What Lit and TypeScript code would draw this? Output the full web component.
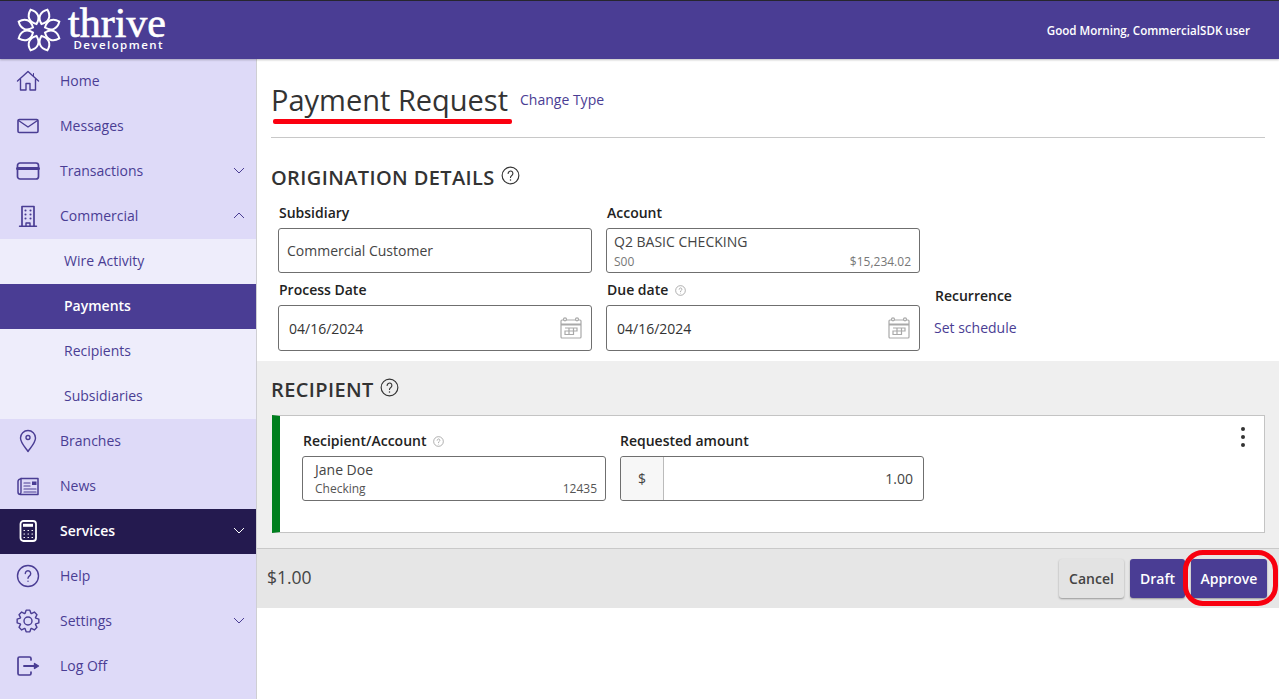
import { LitElement, html, css, svg } from "lit";
import { customElement } from "lit/decorators.js";

const ic = (body: unknown, w = 24, h = 24) => html`<svg class="nav-svg" width=${w} height=${h} viewBox="0 0 24 24" fill="none" stroke="currentColor" stroke-width="1.4" stroke-linejoin="round" stroke-linecap="round">${body}</svg>`;

const gearPath = (() => {
  const teeth = 8;
  const cx = 12, cy = 12;
  let d = "";
  for (let i = 0; i < teeth; i++) {
    const a = (i / teeth) * Math.PI * 2;
    const pt = (r: number, off: number) => {
      const t = a + off;
      return `${(cx + r * Math.cos(t)).toFixed(2)} ${(cy + r * Math.sin(t)).toFixed(2)}`;
    };
    d += `${i === 0 ? "M" : "L"}${pt(8.2, -0.36)} L${pt(11, -0.17)} L${pt(11, 0.17)} L${pt(8.2, 0.36)} `;
  }
  return d + "Z";
})();

const icons: Record<string, unknown> = {
  home: ic(svg`<path d="M1.500 12 12 2.500 22.500 12"/><path d="M4.500 10.500V21h5.500v-6.500h4V21h5.500V10.500"/><path d="M17.500 4.500v2.500" stroke-width="1"/>`),
  mail: ic(svg`<rect x="2" y="5.500" width="20" height="13" rx="1.300" stroke-width="1.600"/><path d="M2.500 6.500 12 13l9.500-6.500"/>`),
  card: ic(svg`<rect x="1.500" y="4" width="21" height="16" rx="2.500" stroke-width="1.700"/><path d="M1.500 9.500h21" stroke-width="3"/>`),
  building: ic(svg`<path d="M6 22V2.500h12V22" stroke-width="1.700"/><path d="M3.500 22.300h17"/><path d="M10 22v-3h4v3"/><g stroke-width="2.100"><path d="M9.500 6.500h.01M14.500 6.500h.01M9.500 10.500h.01M14.500 10.500h.01M9.500 14.500h.01M14.500 14.500h.01"/></g>`),
  pin: ic(svg`<path d="M12 22.500C8.500 17.500 4.500 13.500 4.500 9a7.500 7.500 0 0 1 15 0c0 4.500-4 8.500-7.500 13.500Z"/><circle cx="12" cy="8.500" r="2"/>`),
  news: ic(svg`<path d="M5 4.500h17v16H4.500A2.500 2.500 0 0 1 2 18V7.500A2.500 2.500 0 0 1 4.500 5" stroke-width="1.500"/><path d="M5 4.500V18a2 2 0 0 1-1 2"/><path d="M8 9h6M8 12h6M8 15h12M8 18h12" stroke-width="1.200"/><rect x="16" y="7.500" width="4.500" height="3.500" fill="currentColor" stroke="none"/>`),
  calc: ic(svg`<rect x="4.500" y="2" width="15.500" height="20" rx="3" stroke-width="1.800"/><rect x="7" y="4.800" width="10" height="3" fill="currentColor" stroke="none"/><path stroke-width="1.200" d="M8 11.500h.5M12 11.500h.5M16 11.500h.5M8 15h.5M12 15h.5M16 15h.5M8 18.500h.5M12 18.500h.5M16 18.500h.5"/>`),
  help: ic(svg`<circle cx="12" cy="12" r="10.500"/><path d="M9.300 9.500a2.700 2.700 0 1 1 4.200 2.300c-1 .7-1.500 1.200-1.500 2.500"/><path d="M12 17.300h.01"/>`),
  gear: ic(svg`<circle cx="12" cy="12" r="4"/><path d=${gearPath}/>`),
  logoff: ic(svg`<path d="M15 6V4.500A1.500 1.500 0 0 0 13.500 3H3.500A1.500 1.500 0 0 0 2 4.500v15A1.500 1.500 0 0 0 3.500 21h10a1.500 1.500 0 0 0 1.500-1.500V18" stroke-width="1.700"/><path d="M8 12h11" stroke-width="1.900"/><path d="M18.500 9.500 22.500 12l-4 2.500Z" fill="currentColor"/>`),
};

const chevDown = html`<svg class="chev" width="12" height="7" viewBox="0 0 12 7" fill="none" stroke="currentColor" stroke-width="1"><path d="M1 1l5 5 5-5"/></svg>`;
const chevUp = html`<svg class="chev" width="12" height="7" viewBox="0 0 12 7" fill="none" stroke="currentColor" stroke-width="1"><path d="M1 6l5-5 5 5"/></svg>`;

const helpIcon = (size: number) => html`<svg width=${size} height=${size} viewBox="0 0 20 20" fill="none" stroke="currentColor" stroke-width="1.200"><circle cx="10" cy="10" r="8.800"/><path stroke-linecap="round" d="M7.500 7.800a2.500 2.500 0 1 1 3.900 2.100c-.9.600-1.400 1-1.400 2.100"/><circle cx="10" cy="14.700" r=".8" fill="currentColor" stroke="none"/></svg>`;

const calIcon = html`<svg class="cal" width="22" height="22" viewBox="0 0 22 22" fill="none" stroke="#a9a9a9" stroke-width="1.200"><rect x="1" y="3" width="20" height="18" rx="1"/><path d="M1 7.500h20" stroke-width="2"/><circle cx="5" cy="2.300" r="1.500" fill="#fff"/><circle cx="17" cy="2.300" r="1.500" fill="#fff"/><path d="M5 11h12v3H5M5 14h8.500v3.500H5ZM9 11v6.500M13.500 11v6.500"/></svg>`;

const flower = html`<svg width="46" height="46" viewBox="0 0 46 46" fill="none" stroke="#fff" stroke-width="2">
  ${[0, 45, 90, 135, 180, 225, 270, 315].map(
    (a) => svg`<path transform="rotate(${a + 22.5} 23 23)" d="M23 16.500C16.800 12 16.800 5.500 23 1c6.200 4.500 6.200 11 0 15.500Z"/>`,
  )}
</svg>`;

interface NavItem {
  label: string;
  icon?: string;
  chev?: "down" | "up";
  kind?: "sub" | "sub-active" | "dark";
}

const nav: NavItem[] = [
  { label: "Home", icon: "home" },
  { label: "Messages", icon: "mail" },
  { label: "Transactions", icon: "card", chev: "down" },
  { label: "Commercial", icon: "building", chev: "up" },
  { label: "Wire Activity", kind: "sub" },
  { label: "Payments", kind: "sub-active" },
  { label: "Recipients", kind: "sub" },
  { label: "Subsidiaries", kind: "sub" },
  { label: "Branches", icon: "pin" },
  { label: "News", icon: "news" },
  { label: "Services", icon: "calc", chev: "down", kind: "dark" },
  { label: "Help", icon: "help" },
  { label: "Settings", icon: "gear", chev: "down" },
  { label: "Log Off", icon: "logoff" },
];

@customElement("app-root")
export class AppRoot extends LitElement {
  static styles = css`
    :host {
      display: block;
      width: 1279px;
      height: 699px;
      overflow: hidden;
      position: relative;
      background: #fff;
      font-family: "Open Sans", sans-serif;
      color: #333;
    }
    * { box-sizing: border-box; }
    .header {
      height: 59px;
      background: #4a3d94;
      border-top: 1px solid #26262e;
      display: flex;
      align-items: center;
      justify-content: space-between;
      padding: 0 29px 0 16px;
      box-shadow: 0 1px 2px rgba(0, 0, 0, .25);
      position: relative;
      z-index: 2;
    }
    .brand { display: flex; align-items: center; gap: 6px; color: #fff; }
    .brand-text { display: flex; flex-direction: column; align-items: flex-end; width: 98px; }
    .thrive {
      font-family: "Liberation Serif", serif;
      font-size: 42px;
      line-height: 30px;
      height: 28.500px;
      -webkit-text-stroke: .6px #fff;
    }
    .dev {
      font-size: 11.500px;
      font-weight: 600;
      line-height: 15px;
      letter-spacing: 1.450px;
      margin-right: 2px;
    }
    .greet { color: #fff; font-size: 11.600px; font-weight: 600; }
    .body { display: flex; height: 640px; }
    .side {
      width: 257px;
      flex: none;
      background: #dedaf8;
      border-right: 1px solid #cfcfd3;
    }
    .row {
      height: 45px;
      display: flex;
      align-items: center;
      color: #4a3d94;
      font-size: 14px;
      padding-bottom: 2px;
    }
    .row .ico { width: 60px; flex: none; display: flex; justify-content: center; padding-right: 4px; }
    .row .label { flex: 1; }
    .chev { margin-right: 11px; }
    .row.sub { background: #eeedfb; padding-left: 64px; }
    .row.sub-active { background: #4a3d94; color: #fff; font-weight: 600; padding-left: 64px; }
    .row.dark { background: #241a4f; color: #fff; font-weight: 600; }
    .main { flex: 1; display: flex; flex-direction: column; min-width: 0; }
    .titlebar {
      height: 79px;
      margin: 0 14px;
      border-bottom: 1px solid #c8c8c8;
      display: flex;
      align-items: flex-start;
      padding-top: 21px;
      gap: 12px;
    }
    h1 {
      font-size: 29px;
      line-height: 40px;
      font-weight: 400;
      color: #333;
      margin: 0;
    }
    .link { color: #4a3d94; font-size: 14px; }
    .titlebar .link { line-height: 40px; }
    .section { padding: 0 14px; }
    .orig { height: 223px; padding-top: 25px; }
    h2 {
      display: flex;
      align-items: flex-start;
      gap: 6px;
      font-size: 20px;
      line-height: 30px;
      font-weight: 600;
      letter-spacing: .38px;
      margin: 0;
      color: #333;
    }
    h2 svg { margin-top: 3px; }
    .form {
      display: grid;
      grid-template-columns: 314px 314px auto;
      column-gap: 14px;
      margin: 10px 0 0 7px;
    }
    .lbl {
      font-size: 14px;
      font-weight: 600;
      line-height: 20px;
      color: #222;
      padding-left: 1px;
      display: flex;
      align-items: center;
      gap: 7px;
      height: 20px;
    }
    .lbl svg { color: #888; }
    .form .lbl { margin-bottom: 5px; }
    .box {
      border: 1px solid #6f6f6f;
      border-radius: 3px;
      background: #fff;
      font-size: 14px;
      color: #444;
    }
    .single { height: 45px; display: flex; align-items: center; padding-left: 8px; }
    .multi { height: 45px; padding: 3px 8px 0 7px; }
    .multi .main-line { line-height: 20px; }
    .multi .sub-line {
      display: flex;
      justify-content: space-between;
      font-size: 12px;
      line-height: 16px;
      margin-top: 2px;
      color: #777;
    }
    .date {
      height: 46px;
      display: flex;
      align-items: center;
      justify-content: space-between;
      padding: 0 9px 0 10px;
      color: #333;
    }
    .row2 { margin-top: 7px; }
    .recur { padding-top: 6px; }
    .form .recur .lbl { margin: 0 0 12px; }
    .recur .link { display: block; line-height: 20px; }
    .recip { height: 187px; background: #efefef; padding-top: 14px; }
    .card {
      margin: 10px 0 0 1px;
      height: 118px;
      background: #fff;
      border: 1px solid #c4c4c4;
      border-left: 8px solid #007f1e;
      display: flex;
      padding: 15px 0 0 22px;
      gap: 14px;
      position: relative;
    }
    .card-col .lbl { margin-bottom: 5px; }
    .card-col .lbl.flush { padding-left: 0; }
    .multi.rbox { width: 304px; height: 45px; padding: 3px 8px 0 12px; }
    .multi.rbox .sub-line { color: #555; margin-top: 1px; }
    .amt { width: 304px; height: 45px; display: flex; align-items: stretch; }
    .amt .pre {
      width: 43px;
      background: #f7f7f7;
      border-right: 1px solid #bbb;
      border-radius: 3px 0 0 3px;
      display: flex;
      align-items: center;
      justify-content: center;
      font-size: 14px;
    }
    .amt .val { flex: 1; display: flex; align-items: center; justify-content: flex-end; padding-right: 10px; }
    .dots {
      position: absolute;
      top: 11px;
      right: 19px;
      display: flex;
      flex-direction: column;
      gap: 4px;
    }
    .dots i { width: 4px; height: 4px; border-radius: 50%; background: #333; display: block; }
    .footer {
      height: 60px;
      background: #e6e6e6;
      border-top: 1px solid #c9c9c9;
      display: flex;
      align-items: center;
      justify-content: space-between;
      padding: 0 12px 0 10px;
    }
    .total { font-size: 17.500px; color: #444; margin-top: -3px; }
    .btns { display: flex; gap: 6px; }
    .btn {
      height: 39px;
      border-radius: 3px;
      display: flex;
      align-items: center;
      justify-content: center;
      font-size: 14px;
      font-weight: 600;
      box-shadow: 0 1px 2px rgba(0, 0, 0, .35);
    }
    .cancel { width: 65px; background: #e3e3e3; color: #444; }
    .pri { background: #4a3d94; color: #fff; }
    .draft { width: 55px; }
    .approve { width: 76px; }
    .ann-line {
      position: absolute;
      left: 273px;
      top: 119px;
      width: 239px;
      height: 5px;
      background: #fb0010;
      border-radius: 2px;
    }
    .ann-ring {
      position: absolute;
      left: 1183px;
      top: 550px;
      width: 95px;
      height: 56px;
      border: 5px solid #f8000f;
      border-radius: 20px;
    }
  `;

  render() {
    return html`
      <div class="header">
        <div class="brand">
          ${flower}
          <div class="brand-text">
            <div class="thrive">thrive</div>
            <div class="dev">Development</div>
          </div>
        </div>
        <div class="greet">Good Morning, CommercialSDK user</div>
      </div>
      <div class="body">
        <nav class="side">
          ${nav.map(
            (n) => html`<div class="row ${n.kind ?? ""}">
              ${n.icon ? html`<span class="ico">${icons[n.icon]}</span>` : ""}
              <span class="label">${n.label}</span>
              ${n.chev === "down" ? chevDown : n.chev === "up" ? chevUp : ""}
            </div>`,
          )}
        </nav>
        <div class="main">
          <div class="titlebar">
            <h1>Payment Request</h1>
            <span class="link">Change Type</span>
          </div>
          <section class="section orig">
            <h2>ORIGINATION DETAILS ${helpIcon(19)}</h2>
            <div class="form">
              <div>
                <div class="lbl">Subsidiary</div>
                <div class="box single">Commercial Customer</div>
              </div>
              <div>
                <div class="lbl">Account</div>
                <div class="box multi">
                  <div class="main-line">Q2 BASIC CHECKING</div>
                  <div class="sub-line"><span>S00</span><span>$15,234.02</span></div>
                </div>
              </div>
              <div></div>
              <div class="row2">
                <div class="lbl">Process Date</div>
                <div class="box date"><span>04/16/2024</span>${calIcon}</div>
              </div>
              <div class="row2">
                <div class="lbl">Due date ${helpIcon(11)}</div>
                <div class="box date"><span>04/16/2024</span>${calIcon}</div>
              </div>
              <div class="row2 recur">
                <div class="lbl">Recurrence</div>
                <span class="link">Set schedule</span>
              </div>
            </div>
          </section>
          <section class="section recip">
            <h2>RECIPIENT ${helpIcon(19)}</h2>
            <div class="card">
              <div class="card-col">
                <div class="lbl">Recipient/Account ${helpIcon(11)}</div>
                <div class="box multi rbox">
                  <div class="main-line">Jane Doe</div>
                  <div class="sub-line"><span>Checking</span><span>12435</span></div>
                </div>
              </div>
              <div class="card-col">
                <div class="lbl flush">Requested amount</div>
                <div class="box amt"><div class="pre">$</div><div class="val">1.00</div></div>
              </div>
              <div class="dots"><i></i><i></i><i></i></div>
            </div>
          </section>
          <div class="footer">
            <div class="total">$1.00</div>
            <div class="btns">
              <div class="btn cancel">Cancel</div>
              <div class="btn pri draft">Draft</div>
              <div class="btn pri approve">Approve</div>
            </div>
          </div>
        </div>
      </div>
      <div class="ann-line"></div>
      <div class="ann-ring"></div>
    `;
  }
}
